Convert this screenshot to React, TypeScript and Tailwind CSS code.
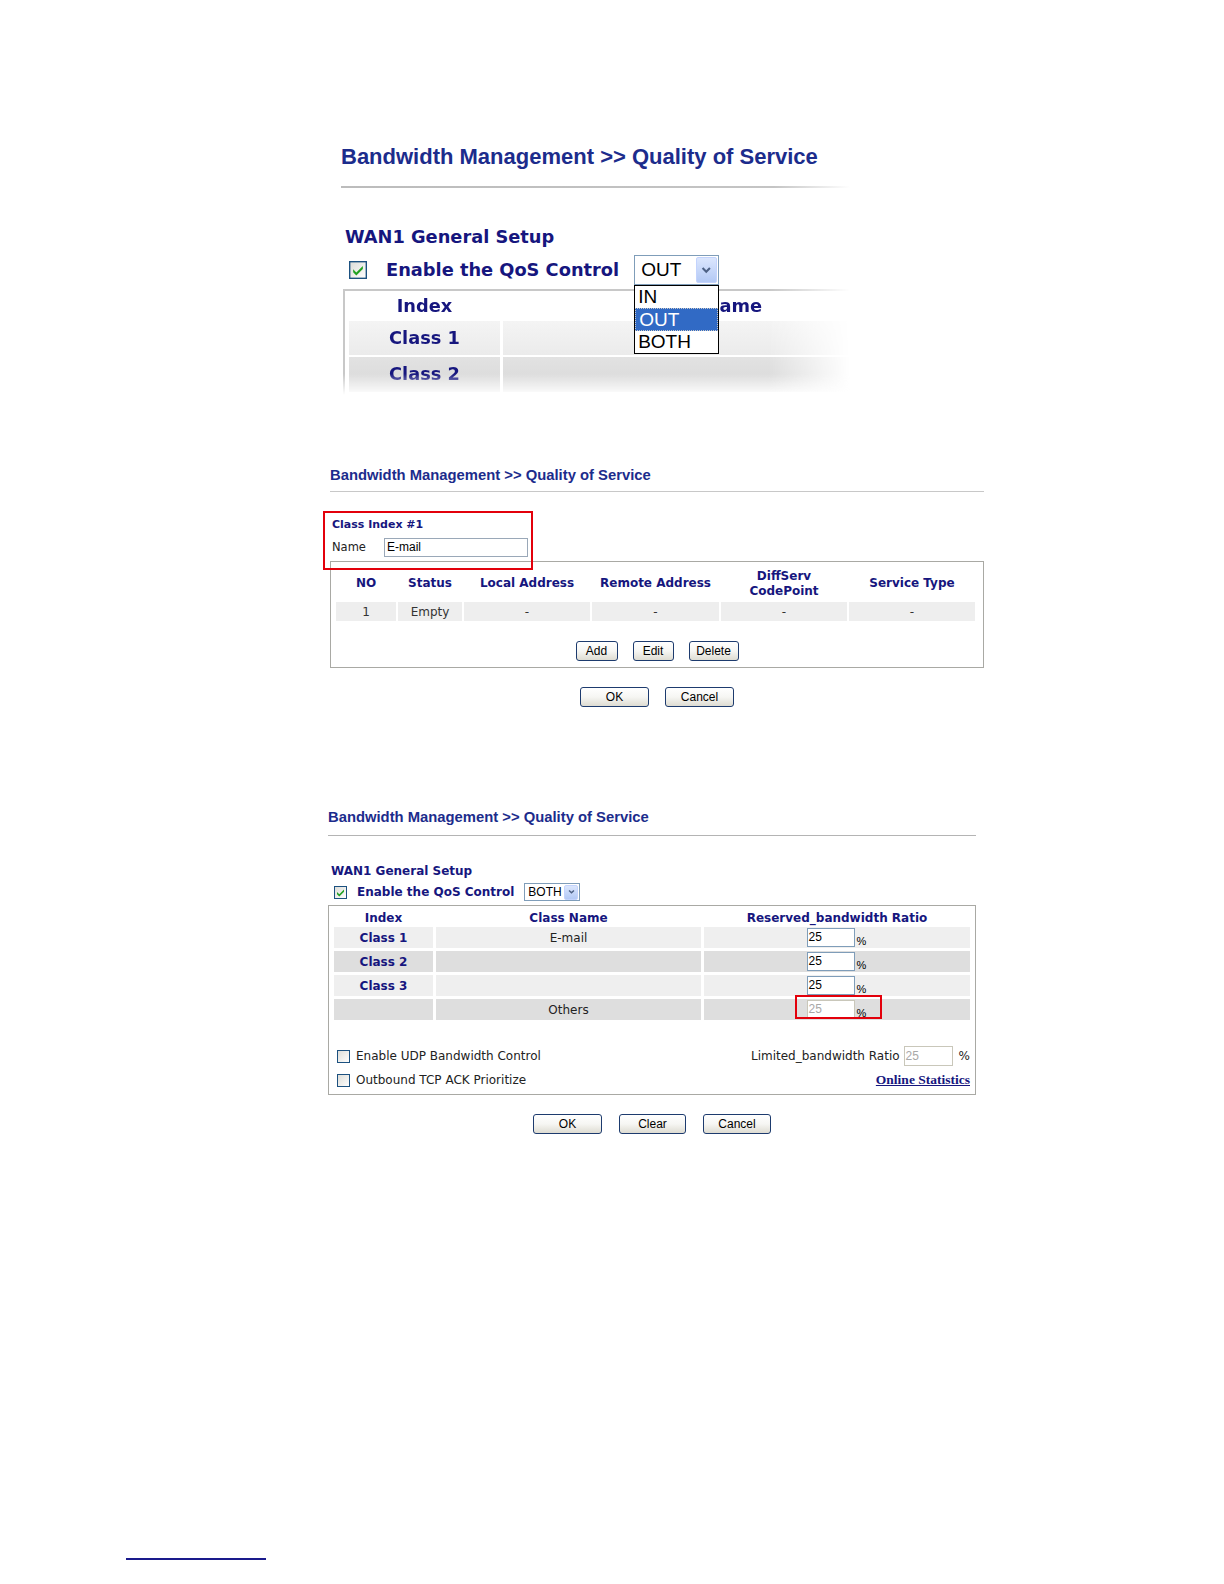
import React from 'react'

const V = "font-['DejaVu_Sans',Verdana,sans-serif]"
const A = "font-['Liberation_Sans',Arial,sans-serif]"
const NAVY = 'text-[#16167e]'

function Check({ size, checked }: { size: number; checked?: boolean }) {
  return (
    <svg width={size} height={size} viewBox="0 0 13 13" className="shrink-0">
      <defs>
        <linearGradient id={`cb${size}${checked ? 1 : 0}`} x1="0" y1="0" x2="1" y2="1">
          <stop offset="0" stopColor="#dcdcd7" />
          <stop offset="1" stopColor="#ffffff" />
        </linearGradient>
      </defs>
      <rect x="0.5" y="0.5" width="12" height="12" fill={`url(#cb${size}${checked ? 1 : 0})`} stroke="#1c5180" strokeWidth="1" />
      {checked && <path d="M3 6 L5.3 8.3 L10 3.6 L10 5.8 L5.3 10.5 L3 8.2 Z" fill="#21a121" />}
    </svg>
  )
}

function Arrow({ w, h }: { w: number; h: number }) {
  return (
    <div
      className="flex items-center justify-center rounded-[2px] bg-gradient-to-b from-[#dbe6fd] to-[#b3c9f5] border border-[#c3d3fd]"
      style={{ width: w, height: h }}
    >
      <svg width={w * 0.5} height={w * 0.4} viewBox="0 0 10 8">
        <path d="M1.5 2 L5 5.5 L8.5 2" fill="none" stroke="#4d6185" strokeWidth="2" />
      </svg>
    </div>
  )
}

function Btn({ label, w }: { label: string; w: number }) {
  return (
    <div
      className={`${A} h-[20px] flex items-center justify-center rounded-[3px] border border-[#1d3b6e] bg-gradient-to-b from-white via-[#f6f6f3] to-[#dedcd2] text-[12px] text-black`}
      style={{ width: w }}
    >
      {label}
    </div>
  )
}

function Title() {
  return (
    <div className={`${A} font-bold text-[14.8px] leading-[18px] text-[#1c2c8c] whitespace-nowrap`}>
      Bandwidth Management {'>>'} Quality of Service
    </div>
  )
}

function SectionOne() {
  return (
    <div className="h-[440px] pt-[145px] pl-[341px]">
      <div className={`${A} font-bold text-[22px] leading-[24px] text-[#1c2c8c] whitespace-nowrap`}>
        Bandwidth Management {'>>'} Quality of Service
      </div>
      <div className="mt-[17px] h-[2px] w-[509px] bg-gradient-to-r from-[#bcbcbc] via-[#c4c4c4] via-85% to-transparent" />
      <div className={`${V} ${NAVY} font-bold text-[17.8px] leading-[22px] mt-[38px] ml-[4px]`}>WAN1 General Setup</div>
      <div className="mt-[7px] h-[30px] flex items-center">
        <div className="ml-[8px]">
          <Check size={18} checked />
        </div>
        <div className={`${V} ${NAVY} font-bold text-[17.8px] ml-[19px] whitespace-nowrap`}>Enable the QoS Control</div>
        <div className="relative ml-[15px] z-10">
          <div className="w-[85px] h-[30px] border border-[#7f9db9] bg-white flex items-center justify-between pl-[6px] pr-[1px]">
            <span className={`${A} text-[19px] text-black`}>OUT</span>
            <Arrow w={21} h={26} />
          </div>
          <div className={`absolute left-0 top-[30px] w-[85px] border border-black bg-white ${A} text-[19px] leading-[22px] text-black`}>
            <div className="pl-[3px] h-[22px]">IN</div>
            <div className="pl-[3px] h-[23px] bg-[#316ac5] text-white border border-dotted border-[#c9c9c9]">OUT</div>
            <div className="pl-[3px] h-[22px]">BOTH</div>
          </div>
        </div>
      </div>
      <div className="mt-[4px] ml-[2px] w-[507px] h-[106px] overflow-hidden [mask-image:linear-gradient(to_right,black_84%,transparent)]">
        <div className="h-full w-[600px] border-l-2 border-t-2 border-[#c8c8c8] pl-[4px] [mask-image:linear-gradient(to_bottom,black_80%,transparent)]">
          <div className="flex h-[30px] items-center">
            <div className={`${V} ${NAVY} font-bold text-[17.8px] w-[151px] shrink-0 text-center`}>Index</div>
            <div className={`${V} ${NAVY} font-bold text-[17.8px] w-[402px] shrink-0 ml-[3px] text-center`}>Class Name</div>
          </div>
          <div className="flex h-[34px]">
            <div className={`${V} ${NAVY} font-bold text-[17.8px] w-[151px] shrink-0 bg-gradient-to-b from-[#f4f4f4] to-[#ebebeb] flex items-center justify-center`}>Class 1</div>
            <div className="w-[402px] shrink-0 ml-[3px] bg-gradient-to-b from-[#f4f4f4] to-[#ebebeb]" />
          </div>
          <div className="flex h-[35px] mt-[2px]">
            <div className={`${V} ${NAVY} font-bold text-[17.8px] w-[151px] shrink-0 bg-gradient-to-b from-[#e2e2e2] to-[#d8d8d8] flex items-center justify-center`}>Class 2</div>
            <div className="w-[402px] shrink-0 ml-[3px] bg-gradient-to-b from-[#e2e2e2] to-[#d8d8d8]" />
          </div>
        </div>
      </div>
    </div>
  )
}

function SectionTwo() {
  const cols = [
    { w: 60, h: 'NO', v: '1' },
    { w: 64, h: 'Status', v: 'Empty' },
    { w: 126, h: 'Local Address', v: '-' },
    { w: 127, h: 'Remote Address', v: '-' },
    { w: 126, h: 'DiffServ\nCodePoint', v: '-' },
    { w: 126, h: 'Service Type', v: '-' },
  ]
  return (
    <div className="relative h-[350px] pt-[26px] pl-[330px]">
      <Title />
      <div className="mt-[7px] h-[1px] w-[654px] bg-[#c8c8c8]" />
      <div className={`${V} ${NAVY} font-bold text-[11px] leading-[14px] mt-[26px] ml-[2px]`}>Class Index #1</div>
      <div className="mt-[6px] ml-[2px] h-[19px] flex items-center">
        <div className={`${V} text-[11.5px] text-[#222] w-[52px]`}>Name</div>
        <div className={`${A} w-[144px] h-[19px] border border-[#9aa8b8] text-[12px] leading-[17px] pl-[2px] text-black`}>E-mail</div>
      </div>
      <div className="mt-[4px] w-[654px] h-[107px] border border-[#a9a9a4] pl-[5px] pt-[5px]">
        <div className="flex gap-[2px] h-[33px] items-center">
          {cols.map((c) => (
            <div
              key={c.h}
              className={`${V} ${NAVY} font-bold text-[12px] leading-[15px] text-center whitespace-pre shrink-0`}
              style={{ width: c.w }}
            >
              {c.h}
            </div>
          ))}
        </div>
        <div className="flex gap-[2px] h-[19px] mt-[2px]">
          {cols.map((c) => (
            <div
              key={c.h}
              className={`${V} text-[12px] text-[#333] bg-[#eeeeee] flex items-center justify-center shrink-0`}
              style={{ width: c.w }}
            >
              {c.v}
            </div>
          ))}
        </div>
        <div className="mt-[20px] flex justify-center gap-[15px] pr-[5px]">
          <Btn label="Add" w={42} />
          <Btn label="Edit" w={41} />
          <Btn label="Delete" w={50} />
        </div>
      </div>
      <div className="mt-[19px] w-[654px] flex justify-center gap-[16px]">
        <Btn label="OK" w={69} />
        <Btn label="Cancel" w={69} />
      </div>
      <div className="absolute left-[323px] top-[71px] w-[210px] h-[59px] border-2 border-[#e3000b]" />
    </div>
  )
}

function SectionThree() {
  const rows = [
    { i: 'Class 1', n: 'E-mail', light: true },
    { i: 'Class 2', n: '', light: false },
    { i: 'Class 3', n: '', light: true },
    { i: '', n: 'Others', light: false, dis: true },
  ]
  return (
    <div className="relative h-[760px] pt-[18px] pl-[328px]">
      <Title />
      <div className="mt-[9px] h-[1px] w-[648px] bg-[#b4b4b4]" />
      <div className={`${V} ${NAVY} font-bold text-[12px] leading-[14px] mt-[28px] ml-[3px]`}>WAN1 General Setup</div>
      <div className="mt-[5px] h-[18px] flex items-center">
        <div className="ml-[6px]">
          <Check size={13} checked />
        </div>
        <div className={`${V} ${NAVY} font-bold text-[12px] ml-[10px] whitespace-nowrap`}>Enable the QoS Control</div>
        <div className="ml-[10px] w-[56px] h-[18px] border border-[#7f9db9] bg-white flex items-center justify-between pl-[3px] pr-[1px]">
          <span className={`${A} text-[12px] text-black`}>BOTH</span>
          <Arrow w={14} h={15} />
        </div>
      </div>
      <div className="mt-[4px] w-[648px] h-[190px] border border-[#a9a9a4] pl-[5px] pt-[4px]">
        <div className="flex gap-[3px] h-[15px] items-center">
          <div className={`${V} ${NAVY} font-bold text-[12px] w-[99px] shrink-0 text-center`}>Index</div>
          <div className={`${V} ${NAVY} font-bold text-[12px] w-[265px] shrink-0 text-center`}>Class Name</div>
          <div className={`${V} ${NAVY} font-bold text-[12px] w-[266px] shrink-0 text-center`}>Reserved_bandwidth Ratio</div>
        </div>
        <div className="mt-[2px] flex flex-col gap-[3px]">
          {rows.map((r, k) => {
            const bg = r.light ? 'bg-[#efefef]' : 'bg-[#dedede]'
            return (
              <div key={k} className="flex gap-[3px] h-[21px]">
                <div className={`${V} ${NAVY} ${bg} font-bold text-[12px] w-[99px] shrink-0 flex items-center justify-center`}>{r.i}</div>
                <div className={`${V} ${bg} text-[12px] text-[#222] w-[265px] shrink-0 flex items-center justify-center`}>{r.n}</div>
                <div className={`${bg} w-[266px] shrink-0 flex items-end justify-center gap-[2px] pb-[1px]`}>
                  <div
                    className={`${A} w-[48px] h-[19px] border ${r.dis ? 'border-[#c9c7ba] text-[#a8a8a8]' : 'border-[#7f9db9] text-black'} bg-white text-[12px] leading-[17px] pl-[1px]`}
                  >
                    25
                  </div>
                  <span className={`${A} text-[11px] leading-[12px] text-black w-[11px]`}>%</span>
                </div>
              </div>
            )
          })}
        </div>
        <div className="mt-[26px] h-[20px] flex items-center justify-between pr-[5px]">
          <div className="flex items-center ml-[3px]">
            <Check size={13} />
            <span className={`${V} text-[12px] text-[#222] ml-[6px]`}>Enable UDP Bandwidth Control</span>
          </div>
          <div className="flex items-center">
            <span className={`${V} text-[12px] text-[#222]`}>Limited_bandwidth Ratio</span>
            <div className={`${A} ml-[4px] w-[49px] h-[20px] border border-[#c9c7ba] bg-white text-[12px] leading-[18px] pl-[1px] text-[#a8a8a8]`}>25</div>
            <span className={`${V} text-[12px] text-[#222] ml-[6px]`}>%</span>
          </div>
        </div>
        <div className="mt-[5px] h-[18px] flex items-center justify-between pr-[5px]">
          <div className="flex items-center ml-[3px]">
            <Check size={13} />
            <span className={`${V} text-[12px] text-[#222] ml-[6px]`}>Outbound TCP ACK Prioritize</span>
          </div>
          <span className="font-['Liberation_Serif',serif] font-bold text-[13.5px] text-[#16167e] underline">Online Statistics</span>
        </div>
      </div>
      <div className="mt-[19px] w-[648px] flex justify-center gap-[17px]">
        <Btn label="OK" w={69} />
        <Btn label="Clear" w={67} />
        <Btn label="Cancel" w={68} />
      </div>
      <div className="absolute left-[795px] top-[205px] w-[87px] h-[24px] border-2 border-[#e3000b]" />
      <div className="absolute left-[126px] top-[768px] w-[140px] h-[2px] bg-[#1a1a8c]" />
    </div>
  )
}

export default function App() {
  return (
    <div className="w-[1224px] h-[1584px] bg-white overflow-hidden">
      <SectionOne />
      <SectionTwo />
      <SectionThree />
    </div>
  )
}
